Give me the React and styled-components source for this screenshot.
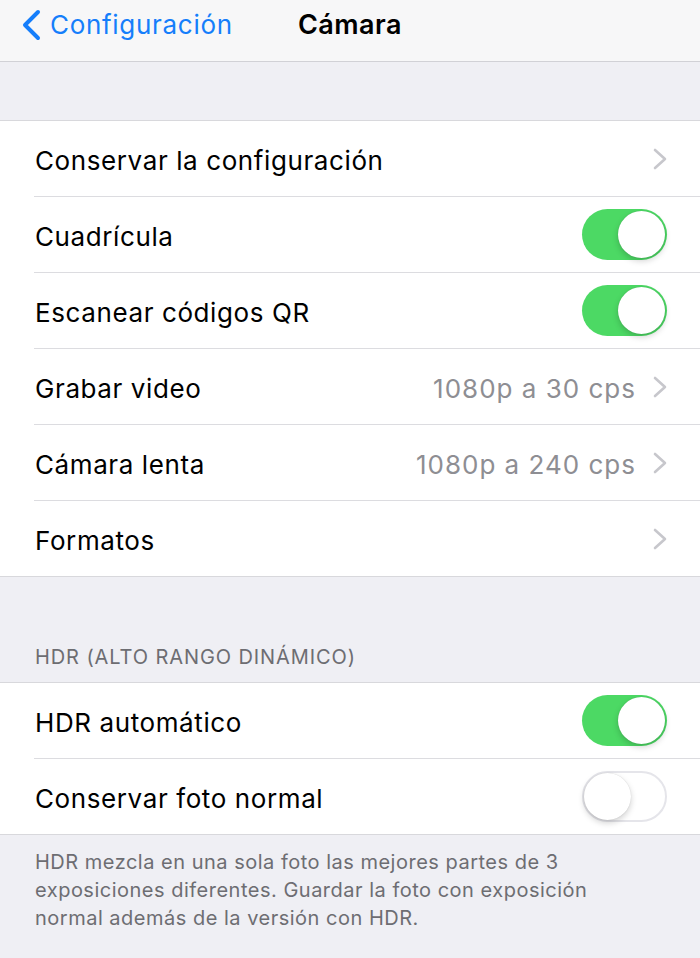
import React from "react";
import styled, { createGlobalStyle } from "styled-components";

const GlobalStyle = createGlobalStyle`
  html, body {
    margin: 0;
    padding: 0;
    background: #efeff4;
  }
  body {
    font-family: Inter, "Liberation Sans", sans-serif;
    -webkit-font-smoothing: antialiased;
  }
`;

const Page = styled.div`
  width: 700px;
  min-height: 958px;
  background: #efeff4;
  overflow: hidden;
`;

const NavBar = styled.div`
  height: 62px;
  box-sizing: border-box;
  background: #f7f7f8;
  border-bottom: 1px solid #d1d1d6;
  display: grid;
  grid-template-columns: 1fr auto 1fr;
  align-items: center;
  padding-bottom: 12px;
`;

const BackButton = styled.div`
  display: flex;
  align-items: center;
  gap: 8px;
  padding-left: 20px;
  color: #157efb;
  font-size: 26px;
  letter-spacing: 0.7px;
`;

const Title = styled.div`
  font-size: 27px;
  font-weight: 600;
  color: #000;
  letter-spacing: 0.5px;
`;

const Spacer = styled.div`
  height: ${(p) => p.h}px;
`;

const Group = styled.div`
  background: #fff;
  border-top: 1px solid #d8d8dc;
  border-bottom: 1px solid #d8d8dc;
`;

const Row = styled.div`
  height: 75px;
  box-sizing: border-box;
  display: flex;
  align-items: center;
  margin-left: 34px;
  padding-right: 33px;
  & + & {
    border-top: 1px solid #dcdce0;
    height: 76px;
  }
`;

const Label = styled.div`
  flex: 1;
  font-size: 26px;
  color: #000;
  letter-spacing: 0.6px;
  padding: 3px 0 0 1px;
`;

const Value = styled.div`
  font-size: 26px;
  color: #8e8e93;
  margin-right: 17px;
  padding-top: 3px;
  letter-spacing: 1px;
`;

const Track = styled.div`
  width: 85px;
  height: 51px;
  border-radius: 26px;
  box-sizing: border-box;
  position: relative;
  background: ${(p) => (p.on ? "#4cd964" : "#fff")};
  border: ${(p) => (p.on ? "none" : "2px solid #e5e5ea")};
`;

const Knob = styled.div`
  position: absolute;
  top: ${(p) => (p.on ? 2 : 0)}px;
  left: ${(p) => (p.on ? 36 : 0)}px;
  width: 47px;
  height: 47px;
  border-radius: 50%;
  background: #fff;
  box-shadow: 0 3px 6px rgba(0, 0, 0, 0.18), 0 0 1px rgba(0, 0, 0, 0.18);
`;

const SectionHeader = styled.div`
  padding: 0 0 13px 35px;
  font-size: 20px;
  color: #6d6d72;
  letter-spacing: 0.9px;
  text-transform: uppercase;
`;

const Footer = styled.div`
  padding: 13px 60px 0 35px;
  font-size: 20px;
  line-height: 28px;
  color: #6d6d72;
  letter-spacing: 0.5px;
`;

const BackChevron = () => (
  <svg width="22" height="32" viewBox="0 0 22 32">
    <path
      d="M18 3 L5 16 L18 29"
      fill="none"
      stroke="#157efb"
      strokeWidth="4"
      strokeLinecap="round"
      strokeLinejoin="round"
    />
  </svg>
);

const Chevron = () => (
  <svg width="14" height="22" viewBox="0 0 14 22">
    <path
      d="M2 2 L12 11 L2 20"
      fill="none"
      stroke="#c7c7cc"
      strokeWidth="2.6"
      strokeLinecap="round"
      strokeLinejoin="round"
    />
  </svg>
);

const Switch = ({ on }) => (
  <Track on={on ? 1 : 0}>
    <Knob on={on ? 1 : 0} />
  </Track>
);

const mainRows = [
  { label: "Conservar la configuración", chevron: true },
  { label: "Cuadrícula", toggle: true },
  { label: "Escanear códigos QR", toggle: true },
  { label: "Grabar video", value: "1080p a 30 cps", chevron: true },
  { label: "Cámara lenta", value: "1080p a 240 cps", chevron: true },
  { label: "Formatos", chevron: true },
];

const hdrRows = [
  { label: "HDR automático", toggle: true },
  { label: "Conservar foto normal", toggle: false },
];

const renderRow = (r) => (
  <Row key={r.label}>
    <Label>{r.label}</Label>
    {r.value && <Value>{r.value}</Value>}
    {r.chevron && <Chevron />}
    {"toggle" in r && <Switch on={r.toggle} />}
  </Row>
);

export default function App() {
  return (
    <Page>
      <GlobalStyle />
      <NavBar>
        <BackButton>
          <BackChevron />
          Configuración
        </BackButton>
        <Title>Cámara</Title>
        <div />
      </NavBar>
      <Spacer h={58} />
      <Group>{mainRows.map(renderRow)}</Group>
      <Spacer h={68} />
      <SectionHeader>HDR (alto rango dinámico)</SectionHeader>
      <Group>{hdrRows.map(renderRow)}</Group>
      <Footer>
        HDR mezcla en una sola foto las mejores partes de 3 exposiciones
        diferentes. Guardar la foto con exposición normal además de la versión
        con HDR.
      </Footer>
    </Page>
  );
}
